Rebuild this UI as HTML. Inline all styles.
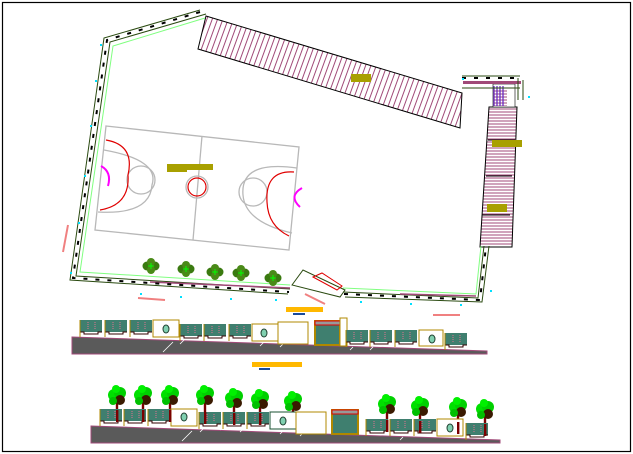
<!DOCTYPE html>
<html><head><style>html,body{margin:0;padding:0;background:#fff}svg{display:block}</style></head>
<body>
<svg width="633" height="454" viewBox="0 0 633 454" xmlns="http://www.w3.org/2000/svg">
<defs>
<pattern id="h" width="5" height="5" patternUnits="userSpaceOnUse" patternTransform="rotate(20)"><line x1="1" y1="0" x2="1" y2="5" stroke="#a04a78" stroke-width="1"/></pattern>
<pattern id="hz" width="4" height="3" patternUnits="userSpaceOnUse"><line x1="0" y1="1" x2="4" y2="1" stroke="#a04a78" stroke-width="1"/></pattern>
<g id="tree"><rect x="-1.2" y="0" width="2.4" height="24" fill="#7a0000"/><circle cx="-3" cy="-2" r="6" fill="#00e000"/><circle cx="3" cy="-4" r="6" fill="#00d000"/><circle cx="3" cy="3" r="5" fill="#3a1a00"/><circle cx="-1" cy="-8" r="4" fill="#00f000"/><circle cx="-4" cy="4" r="4" fill="#00c000"/></g>
<g id="pan"><rect x="0" y="0" width="22" height="12" fill="#3f7f6f"/><line x1="8" y1="2" x2="8" y2="10" stroke="#e07090" stroke-dasharray="1 1"/><line x1="15" y1="2" x2="15" y2="10" stroke="#e07090" stroke-dasharray="1 1"/><path d="M0 12 h4 v2 h14 v-2 h4" stroke="#300" fill="none"/><line x1="0" y1="0" x2="0" y2="17" stroke="#b08800"/></g>
<g id="bush"><circle cx="-4" cy="0" r="4.5" fill="#3a7a10"/><circle cx="4" cy="0" r="4.5" fill="#3a7a10"/><circle cx="0" cy="-4" r="4" fill="#4a8a18"/><circle cx="0" cy="4" r="4" fill="#4a8a18"/><path d="M-3 0h6M0-3v6" stroke="#0f0"/></g>
</defs>
<rect x="2.5" y="2.5" width="628" height="449" fill="none" stroke="#000" stroke-width="1.2"/>

<polygon points="206,16 462,93 460,128 198,49" fill="url(#h)" stroke="#000" stroke-width="1"/>
<rect x="351" y="74" width="20" height="8" fill="#a8a000"/>
<polygon points="489,107 517,107 512,247 480,247" fill="url(#hz)" stroke="#000" stroke-width="1"/>
<line x1="486" y1="176" x2="512" y2="176" stroke="#000"/>
<line x1="488" y1="140" x2="515" y2="140" stroke="#000"/>
<line x1="482" y1="215" x2="510" y2="215" stroke="#000"/>
<rect x="493" y="84" width="22" height="23" fill="#fff" stroke="#000" stroke-width="0.6"/>
<rect x="493" y="86" width="14" height="20" fill="url(#hz)"/>
<path d="M494 86v20M497 86v20M500 86v20M503 86v20" stroke="#6020c0" stroke-width="1.2"/>
<rect x="492" y="140" width="30" height="7" fill="#a8a000"/>
<rect x="487" y="204" width="20" height="8" fill="#a8a000"/>
<rect x="463" y="81" width="58" height="3" fill="#a04a78"/>
<path d="M462 76 L520 76 M462 88 L520 88 M518 78 L518 100 M523 80 L523 100" stroke="#2a4a10" stroke-width="1" fill="none"/>

<g fill="none" stroke-width="1">
<polyline points="206,14 110,42 76,276 290,289" stroke="#2a4a10"/>
<polyline points="205,18 113,46 80,272 290,285" stroke="#80ff80"/>
<polyline points="200,10 104,38 70,280 288,294" stroke="#2a4a10"/>
<polyline points="343,292 478,298 484,246" stroke="#2a4a10"/>
<polyline points="343,288 476,294 481,246" stroke="#80ff80"/>
<polyline points="345,297 482,302 489,246" stroke="#2a4a10"/>
<polyline points="150,282 290,288" stroke="#a04a78" stroke-width="1.5"/>
<polyline points="400,294 476,296" stroke="#a04a78" stroke-width="1.5"/>
<polygon points="292,285 303,270 345,290 340,297" stroke="#2a4a10"/>
<polygon points="313,277 322,273 342,286 337,290" stroke="#e00000"/>
</g>
<g stroke="#000" stroke-width="2" stroke-dasharray="4 8" fill="none">
<polyline points="200,12 107,40 73,278 289,292"/>
<polyline points="344,294 480,300 486,246"/>
<polyline points="462,78 520,78"/>
</g>
<g fill="#00e0ff"><rect x="100" y="44" width="2" height="2"/><rect x="95" y="80" width="2" height="2"/><rect x="90" y="125" width="2" height="2"/><rect x="84" y="175" width="2" height="2"/><rect x="78" y="222" width="2" height="2"/><rect x="70" y="272" width="2" height="2"/><rect x="140" y="293" width="2" height="2"/><rect x="180" y="296" width="2" height="2"/><rect x="230" y="298" width="2" height="2"/><rect x="275" y="299" width="2" height="2"/><rect x="360" y="301" width="2" height="2"/><rect x="410" y="303" width="2" height="2"/><rect x="460" y="304" width="2" height="2"/><rect x="490" y="290" width="2" height="2"/><rect x="462" y="78" width="2" height="2"/><rect x="528" y="96" width="2" height="2"/></g>

<g fill="none" stroke="#b8b8b8" stroke-width="1.3">
<polygon points="106,126 299,147 289,250 95,230"/>
<line x1="202" y1="136" x2="193" y2="240"/>
<path d="M104 150 Q160 160 152 185 Q150 215 98 212"/>
<circle cx="141" cy="180" r="14"/>
<path d="M297 168 Q240 160 243 195 Q245 222 292 233"/>
<circle cx="253" cy="192" r="14"/>
<circle cx="197" cy="187" r="11"/>
</g>
<circle cx="197" cy="187" r="9" fill="none" stroke="#e00000" stroke-width="1.2"/>
<path d="M106 140 Q135 145 128 175 Q130 205 100 210" fill="none" stroke="#e00000" stroke-width="1.2"/>
<path d="M294 172 Q265 170 267 202 Q268 226 289 236" fill="none" stroke="#e00000" stroke-width="1.2"/>
<path d="M101 166 Q112 172 108 186" fill="none" stroke="#ff00ff" stroke-width="2"/>
<path d="M302 188 Q288 196 300 207" fill="none" stroke="#ff00ff" stroke-width="2"/>
<rect x="167" y="164" width="46" height="6" fill="#a8a000"/><rect x="167" y="168" width="20" height="4" fill="#a8a000"/>

<use href="#bush" x="151" y="266"/><use href="#bush" x="186" y="269"/><use href="#bush" x="215" y="272"/><use href="#bush" x="241" y="273"/><use href="#bush" x="273" y="278"/>

<path d="M68 225 L63 252" stroke="#f08080" stroke-width="2"/><path d="M138 298 L165 300" stroke="#f08080" stroke-width="2"/><path d="M305 294 L325 304" stroke="#f08080" stroke-width="2"/><path d="M433 315 L460 315" stroke="#f08080" stroke-width="2"/>
<rect x="286" y="307" width="37" height="5" fill="#ffb800"/><rect x="293" y="313" width="12" height="2" fill="#1a4a9a"/>

<polygon points="72,337 487,351 487,354 72,354" fill="#5a5a5a" stroke="#a04a78"/>
<g stroke="#fff" stroke-width="0.8"><path d="M163 352l10-10M180 344l6-6M200 340l6-6M220 340l4-4M260 346l4-4M280 347l4-4M350 350l3-3M370 350l3-3"/></g>
<g>
<use href="#pan" x="80" y="320"/><use href="#pan" x="105" y="320"/><use href="#pan" x="130" y="320"/>
<rect x="153" y="320" width="26" height="17" fill="#fff" stroke="#b08800"/>
<use href="#pan" x="180" y="324"/><use href="#pan" x="204" y="324"/><use href="#pan" x="229" y="324"/>
<rect x="252" y="324" width="26" height="17" fill="#fff" stroke="#b08800"/>
<rect x="278" y="322" width="30" height="22" fill="#fff" stroke="#b08800"/>
<rect x="315" y="321" width="25" height="24" fill="#3f7f6f" stroke="#b08800" stroke-width="2"/>
<rect x="315" y="321" width="25" height="4" fill="#999" stroke="#e00000"/>
<rect x="340" y="318" width="7" height="28" fill="#fff" stroke="#b08800"/>
<use href="#pan" x="346" y="330"/><use href="#pan" x="370" y="330"/><use href="#pan" x="395" y="330"/>
<rect x="419" y="330" width="24" height="16" fill="#fff" stroke="#b08800"/>
<use href="#pan" x="445" y="333"/>
<ellipse cx="166" cy="329" rx="3" ry="4" fill="#80d0b0" stroke="#204030"/>
<ellipse cx="264" cy="333" rx="3" ry="4" fill="#80d0b0" stroke="#204030"/>
<ellipse cx="432" cy="339" rx="3" ry="4" fill="#80d0b0" stroke="#204030"/>
</g>
<rect x="252" y="362" width="50" height="5" fill="#ffb800"/><rect x="259" y="368" width="11" height="2" fill="#1a4a9a"/>

<polygon points="91,426 500,440 500,443 91,443" fill="#5a5a5a" stroke="#a04a78"/>
<g stroke="#fff" stroke-width="0.8"><path d="M182 441l10-10M200 432l6-6M220 430l5-5M240 432l4-4M280 434l4-4M300 436l4-4M400 440l3-3"/></g>
<use href="#tree" x="117" y="397"/><use href="#tree" x="143" y="397"/><use href="#tree" x="170" y="397"/><use href="#tree" x="205" y="397"/><use href="#tree" x="234" y="400"/><use href="#tree" x="260" y="401"/><use href="#tree" x="293" y="403"/><use href="#tree" x="387" y="406"/><use href="#tree" x="420" y="408"/><use href="#tree" x="458" y="409"/><use href="#tree" x="485" y="411"/>
<g>
<use href="#pan" x="100" y="409"/><use href="#pan" x="124" y="409"/><use href="#pan" x="148" y="409"/>
<rect x="171" y="409" width="26" height="17" fill="#fff" stroke="#b08800"/>
<use href="#pan" x="199" y="412"/><use href="#pan" x="223" y="412"/><use href="#pan" x="247" y="412"/>
<rect x="270" y="412" width="26" height="17" fill="#fff" stroke="#1a5030"/>
<rect x="296" y="412" width="30" height="22" fill="#fff" stroke="#b08800"/>
<rect x="332" y="410" width="26" height="24" fill="#3f7f6f" stroke="#b08800" stroke-width="2"/>
<rect x="332" y="410" width="26" height="4" fill="#999" stroke="#e00000"/>
<use href="#pan" x="366" y="419"/><use href="#pan" x="390" y="419"/><use href="#pan" x="414" y="419"/>
<rect x="437" y="419" width="26" height="17" fill="#fff" stroke="#b08800"/>
<use href="#pan" x="466" y="423"/>
<ellipse cx="184" cy="417" rx="3" ry="4" fill="#80d0b0" stroke="#204030"/>
<ellipse cx="283" cy="421" rx="3" ry="4" fill="#80d0b0" stroke="#204030"/>
<ellipse cx="450" cy="428" rx="3" ry="4" fill="#80d0b0" stroke="#204030"/>
</g>
<g fill="#7a0000"><rect x="116" y="410" width="2.4" height="12"/><rect x="142" y="410" width="2.4" height="12"/><rect x="169" y="410" width="2.4" height="12"/><rect x="204" y="412" width="2.4" height="12"/><rect x="233" y="413" width="2.4" height="12"/><rect x="259" y="413" width="2.4" height="12"/><rect x="386" y="420" width="2.4" height="12"/><rect x="419" y="421" width="2.4" height="12"/><rect x="457" y="422" width="2.4" height="12"/><rect x="484" y="424" width="2.4" height="12"/></g>
</svg>
</body></html>
